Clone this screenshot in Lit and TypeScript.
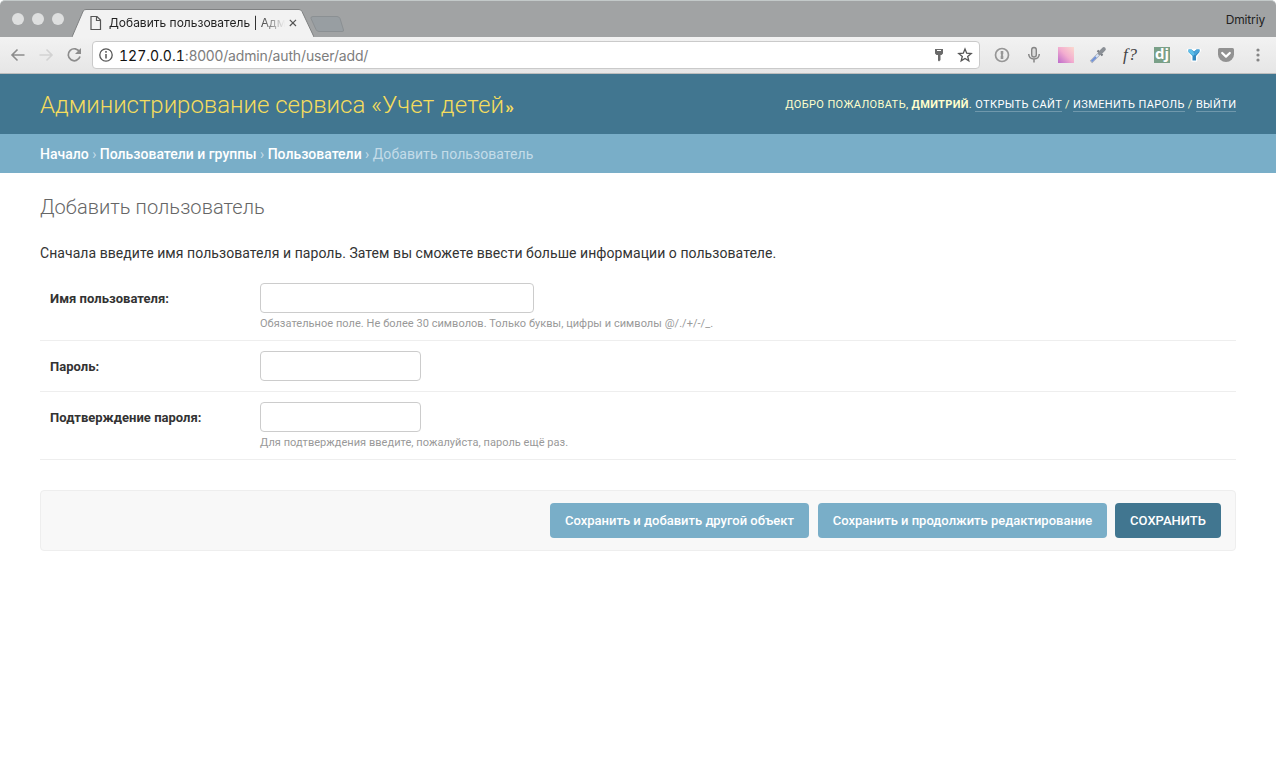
import { LitElement, html, css, svg } from "lit";
import { customElement } from "lit/decorators.js";

const icon = (w: number, h: number, body: unknown) =>
  html`<svg class="ico" width=${w} height=${h} viewBox="0 0 ${w} ${h}" fill="none">${body}</svg>`;

@customElement("browser-chrome")
class BrowserChrome extends LitElement {
  static styles = css`
    :host { display: block; }
    svg { display: block; flex: none; }
    .titlebar {
      height: 37px; box-sizing: border-box; display: flex; align-items: flex-end;
      background: #a1a3a4; border-top: 1px solid #c3c9c9; border-radius: 5px 5px 0 0;
      font: 12px Inter, sans-serif; color: #222; padding-right: 11px;
    }
    .lights { display: flex; gap: 8px; padding: 0 0 12px 12px; }
    .light { width: 12px; height: 12px; border-radius: 50%; background: #dedfdf; }
    .tab { width: 242px; height: 28px; margin-left: 8px; position: relative; }
    .shape { position: absolute; left: 0; top: 0; }
    .tabrow { position: relative; display: flex; align-items: center; height: 28px; padding-left: 18px; }
    .title {
      width: 180px; margin-left: 7px; white-space: nowrap; line-height: 20px; letter-spacing: 0;
      -webkit-mask-image: linear-gradient(90deg, #000 148px, transparent 176px);
    }
    .newtab { padding-bottom: 4px; margin-left: -5px; }
    .profile { margin-left: auto; line-height: 15px; padding-bottom: 10px; letter-spacing: -.15px; }
    .toolbar {
      height: 37px; box-sizing: border-box; display: flex; align-items: center;
      background: linear-gradient(#f2f2f2, #e6e6e6); border-bottom: 1px solid #bdbdbd; padding: 0 8px 0 8px;
    }
    .nav { display: flex; gap: 8px; width: 84px; }
    .omnibox {
      width: 888px; height: 28px; box-sizing: border-box; background: #fff; border: 1px solid #cacaca;
      border-radius: 4px; display: flex; align-items: center; padding: 0 4px 0 3px;
    }
    .url { flex: 1; margin-left: 3px; padding-top: 1px; font: 14px/20px Inter, sans-serif; letter-spacing: -.15px; color: #7d7d7d; white-space: nowrap; }
    .host { color: #111; font-variant-numeric: tabular-nums; letter-spacing: 0; }
    .marks { display: flex; gap: 6px; }
    .ext { display: flex; gap: 12px; margin-left: 12px; }
    .fq { width: 20px; height: 20px; font: italic 17px/20px "Liberation Serif", serif; color: #444; text-align: center; letter-spacing: 1px; text-indent: 1px; }
    .dj {
      width: 16px; height: 16px; margin: 2px; background: #7aa088; color: #fff; text-align: center;
      font: bold 15px/13px "Open Sans", sans-serif;
    }
  `;

  render() {
    return html`
      <div class="titlebar">
        <div class="lights"><div class="light"></div><div class="light"></div><div class="light"></div></div>
        <div class="tab">
          <svg class="shape" width="242" height="28" viewBox="0 0 242 28">
            <path d="M0 28 L11.2 2 Q12.2 .5 14 .5 H227 Q229 .5 230 2.5 L242 28Z" fill="#f2f2f2"/>
            <path d="M0 28 L11.2 2 Q12.2 .5 14 .5 H227 Q229 .5 230 2.5 L242 28" fill="none" stroke="#7f8182"/>
          </svg>
          <div class="tabrow">
            ${icon(12, 16, svg`<path d="M1 1.5H7L10.5 5V14.5H1ZM6.5 1.8V5.5H10.3" stroke="#555" stroke-width="1.2"/>`)}
            <span class="title">Добавить пользователь | Адм</span>
            ${icon(8, 8, svg`<path d="M.8 .8 7 7M7 .8 .8 7" stroke="#555" stroke-width="1.2"/>`)}
          </div>
        </div>
        <div class="newtab">${icon(36, 18, svg`<path d="M4 1.5H28Q30 1.5 31 3.5L34.5 15Q35 16.500 33 16.500H10Q8 16.500 7 14.500L2 3.500Q1.500 1.500 4 1.500Z" fill="#989ea2" stroke="#8b9093"/>`)}</div>
        <span class="profile">Dmitriy</span>
      </div>
      <div class="toolbar">
        <div class="nav">
          ${icon(20, 20, svg`<path d="M16.500 10H4.500M9.500 4.500 4 10 9.500 15.500" stroke="#8c8c8c" stroke-width="1.600"/>`)}
          ${icon(20, 20, svg`<path d="M3.500 10H15.500M10.500 4.500 16 10 10.500 15.500" stroke="#d2d2d2" stroke-width="1.600"/>`)}
          ${icon(20, 20, svg`<path d="M15.600 7A6 6 0 1 0 16 11.500" stroke="#8c8c8c" stroke-width="1.700"/><path d="M17 3V9H11Z" fill="#8c8c8c"/>`)}
        </div>
        <div class="omnibox">
          ${icon(20, 20, svg`<circle cx="10" cy="10" r="6.200" stroke="#555" stroke-width="1.300"/><path d="M10 9V13.500M10 6V7.700" stroke="#555" stroke-width="1.500"/>`)}
          <span class="url"><span class="host">127.0.0.1</span>:8000/admin/auth/user/add/</span>
          <div class="marks">
            ${icon(20, 20, svg`<path fill-rule="evenodd" d="M6 4H14V8.500L12.500 10H11.500V15L10 16.500L9 15.500V10H7.500L6 8.500ZM8 5V6H12V5Z" fill="#6a6a6a"/>`)}
            ${icon(20, 20, svg`<path d="M10 4 11.700 8.200 16.200 8.500 12.700 11.400 13.800 15.800 10 13.400 6.200 15.800 7.300 11.400 3.800 8.500 8.300 8.200Z" stroke="#555" stroke-width="1.300"/>`)}
          </div>
        </div>
        <div class="ext">
          ${icon(20, 20, svg`<circle cx="10" cy="10" r="6.500" stroke="#969696" stroke-width="1.700"/><path d="M8.700 6H11.300V9L10.800 10 11.300 11V14H8.700V11L9.200 10 8.700 9Z" fill="#969696"/>`)}
          ${icon(20, 20, svg`<rect x="7.700" y="2.500" width="4.600" height="9.500" rx="2.300" fill="#dcdcdc" stroke="#858585" stroke-width="1.400"/><path d="M4.700 9Q5 14 10 14T15.300 9M10 14V17.500" stroke="#858585" stroke-width="1.500"/>`)}
          ${icon(20, 20, svg`<defs><linearGradient id="pk" x1="0" y1="1" x2="1" y2="0"><stop stop-color="#bd6acb"/><stop offset=".5" stop-color="#f3adcf"/><stop offset="1" stop-color="#fbd9ce"/></linearGradient></defs><rect x="2" y="2" width="16" height="16" fill="url(#pk)"/>`)}
          ${icon(20, 20, svg`<path d="M3 17 11 9" stroke="#a4a9b2" stroke-width="3.200"/><path d="M3.600 16.400 10.500 9.500" stroke="#d5e2f6" stroke-width="2"/><path d="M3.600 16.400 8 12" stroke="#6e90d8" stroke-width="2"/><path d="M9.500 5.500 14.500 10.500" stroke="#70757b" stroke-width="2"/><path d="M12 8 15.800 4.200" stroke="#8b9096" stroke-width="4" stroke-linecap="round"/>`)}
          <span class="fq">f?</span>
          <div class="dj">dj</div>
          ${icon(20, 20, svg`<path d="M4 5H16L12 11.500V15.500H8.500V11.500Z" fill="#fff" stroke="#fff" stroke-width="2.600" stroke-linejoin="round"/><path d="M4.500 4.500H7.500L10 6.500 12.500 4.500H15.500V7L12 11V15.500H8.500V11L4.500 7Z" fill="#3289c0"/><path d="M4.500 4.500H7.500L10 7.500V10.500H8.500L4.500 7Z" fill="#5fc0ea"/><path d="M10 7.500 12.500 4.500H15.500V6L11.500 10H10Z" fill="#4aa5da"/>`)}
          ${icon(20, 20, svg`<path d="M3.500 3H16.500Q18 3 18 4.500V9.500A8 7.500 0 0 1 2 9.500V4.500Q2 3 3.500 3Z" fill="#929292"/><path d="M6.200 8 10 11.600 13.800 8" stroke="#fff" stroke-width="2.200" stroke-linecap="round" stroke-linejoin="round"/>`)}
          ${icon(20, 20, svg`<circle cx="10" cy="5" r="1.600" fill="#858585"/><circle cx="10" cy="10" r="1.600" fill="#858585"/><circle cx="10" cy="15" r="1.600" fill="#858585"/>`)}
        </div>
      </div>`;
  }
}

@customElement("app-root")
class AppRoot extends LitElement {
  static styles = css`
    :host { display: block; height: 778px; overflow: hidden; background: #fff; color: #333; font: 13px Roboto, sans-serif; }
    .header {
      height: 60px; background: #417690; padding: 0 40px; display: flex; align-items: center; justify-content: space-between;
      white-space: nowrap;
    }
    .brand { margin: 0; font-size: 24px; font-weight: 300; line-height: 28px; padding-top: 4px; color: #f5dd5d; letter-spacing: -.03px; }
    .name { letter-spacing: .25px; }
    .raquo { font-size: 17px; font-weight: 900; margin-left: 1px; }
    .user { color: #ffc; font-size: 11px; line-height: 14px; letter-spacing: .375px; padding-top: 1px; text-transform: uppercase; margin-right: -.4px; }
    .user b { font-weight: 700; }
    .user a { color: #fff; border-bottom: 1px solid rgba(255, 255, 255, .25); }
    .crumbs { height: 39px; box-sizing: border-box; padding: 11px 40px 0; background: #79aec8; color: #c4dce8; font-size: 14px; line-height: 18px; white-space: nowrap; }
    .crumbs a { color: #fff; font-weight: 500; }
    .here { letter-spacing: .06px; }
    .content { padding: 21px 40px 0; }
    .heading { margin: 0; font-size: 20px; font-weight: 300; line-height: 26px; color: #666; letter-spacing: .07px; }
    .lead { margin: 24px 0 0; font-size: 14px; line-height: 18px; letter-spacing: .06px; }
    .row { display: flex; box-sizing: border-box; padding: 10px 10px 0; border-bottom: 1px solid #eee; }
    .first { height: 68px; margin-top: 11px; }
    .mid { height: 51px; }
    .last { height: 68px; }
    .label { width: 210px; padding-top: 8px; line-height: 15px; font-weight: 700; letter-spacing: .03px; }
    .input { display: block; box-sizing: border-box; width: 161px; height: 30px; margin: 0; border: 1px solid #ccc; border-radius: 4px; background: #fff; outline: none; }
    .wide { width: 274px; }
    .help { font-size: 11px; line-height: 14px; margin-top: 4px; color: #999; letter-spacing: .045px; }
    .submit {
      margin-top: 30px; height: 61px; box-sizing: border-box; display: flex; justify-content: flex-end; gap: 8px;
      padding: 12px 14px; background: #f8f8f8; border: 1px solid #eee; border-radius: 4px;
    }
    .btn { height: 35px; padding: 0; border: 0; border-radius: 4px; background: #79aec8; color: #fff; font: 500 13px Roboto, sans-serif; white-space: nowrap; }
    .add { width: 259px; margin-right: 1px; }
    .cont { width: 289px; }
    .save { width: 106px; background: #417690; text-transform: uppercase; }
  `;

  render() {
    return html`
      <browser-chrome></browser-chrome>
      <header class="header">
        <h1 class="brand">Администрирование сервиса <span class="name">«Учет детей</span><span class="raquo">»</span></h1>
        <div class="user">Добро пожаловать, <b>Дмитрий</b>. <a>Открыть сайт</a> / <a>Изменить пароль</a> / <a>Выйти</a></div>
      </header>
      <nav class="crumbs"><a>Начало</a> › <a>Пользователи и группы</a> › <a>Пользователи</a> › <span class="here">Добавить пользователь</span></nav>
      <main class="content">
        <h2 class="heading">Добавить пользователь</h2>
        <p class="lead">Сначала введите имя пользователя и пароль. Затем вы сможете ввести больше информации о пользователе.</p>
        <div class="row first">
          <label class="label">Имя пользователя:</label>
          <div><input class="input wide" type="text">
            <div class="help">Обязательное поле. Не более 30 символов. Только буквы, цифры и символы @/./+/-/_.</div></div>
        </div>
        <div class="row mid">
          <label class="label">Пароль:</label>
          <input class="input" type="password">
        </div>
        <div class="row last">
          <label class="label">Подтверждение пароля:</label>
          <div><input class="input" type="password">
            <div class="help">Для подтверждения введите, пожалуйста, пароль ещё раз.</div></div>
        </div>
        <div class="submit">
          <button class="btn add">Сохранить и добавить другой объект</button>
          <button class="btn cont">Сохранить и продолжить редактирование</button>
          <button class="btn save">Сохранить</button>
        </div>
      </main>`;
  }
}
